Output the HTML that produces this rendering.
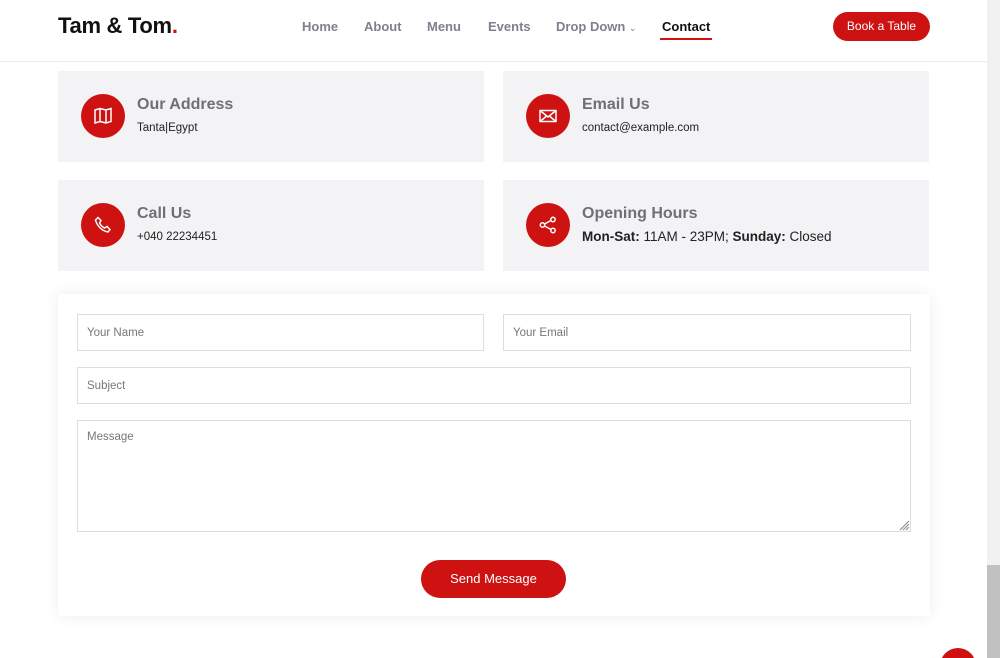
<!DOCTYPE html>
<html style="overflow:hidden;height:658px"><head><meta charset="utf-8"><style>
*{box-sizing:border-box;margin:0;padding:0}
body{width:1000px;height:658px;overflow:hidden;background:#fff;font-family:"Liberation Sans",sans-serif;position:relative}
.sb{position:absolute;left:987px;top:0;width:13px;height:658px;background:#f1f1f1}
.sb i{position:absolute;left:0;top:565px;width:13px;height:93px;background:#c1c1c1}
.hdr{position:absolute;left:0;top:0;width:987px;height:62px;border-bottom:1px solid #ececec;background:#fff}
.logo{position:absolute;left:58px;top:13px;font-size:22px;font-weight:bold;color:#111;letter-spacing:-0.3px}
.logo span{color:#ce1212}
.nav a{position:absolute;top:19px;font-size:13px;color:#7f7f90;text-decoration:none;font-weight:bold}
.nav a.act{color:#111}
.nav a.act:after{content:"";position:absolute;left:-2px;right:-2px;top:19px;height:2px;background:#ce1212}
.btn{position:absolute;left:833px;top:12px;width:97px;height:29px;border-radius:15px;background:#ce1212;color:#fff;font-size:12px;text-align:center;line-height:29px}
.card{position:absolute;width:426px;height:91px;background:#f3f3f5}
.ic{position:absolute;left:23px;top:23px;width:44px;height:44px;border-radius:50%;background:#ce1212}
.ic svg{position:absolute;left:12px;top:12px}
.card h3{position:absolute;left:79px;top:25px;font-size:16px;color:#6f6f7a}
.card p{position:absolute;left:79px;top:51px;font-size:11.5px;color:#222}
.form{position:absolute;left:58px;top:294px;width:872px;height:322px;background:#fff;box-shadow:0 0 15px rgba(0,0,0,0.07)}
.in{position:absolute;border:1px solid #ddd;background:#fff;font-size:11.5px;color:#777;padding:12px 9px}
.send{position:absolute;left:421px;top:560px;width:145px;height:38px;border-radius:19px;background:#ce1212;color:#fff;font-size:13px;text-align:center;line-height:38px}
.dotw{position:absolute;left:930px;top:640px;width:56px;height:18px;overflow:hidden}
.dot{position:absolute;left:10px;top:8px;width:36px;height:36px;border-radius:50%;background:#ce1212}
</style></head><body>
<div class="hdr">
<div class="logo">Tam &amp; Tom<span>.</span></div>
<div class="nav">
<a style="left:302px">Home</a><a style="left:364px">About</a><a style="left:427px">Menu</a><a style="left:488px">Events</a><a style="left:556px">Drop Down <span style="font-size:9px;font-weight:normal">&#8964;</span></a><a class="act" style="left:662px">Contact</a>
</div>
<div class="btn">Book a Table</div>
</div>

<div class="card" style="left:58px;top:71px"><div class="ic"><svg width="20" height="20" viewBox="0 0 20 20" fill="none" stroke="#fff" stroke-width="1.5"><path d="M2 4l5-1.5 6 1.5 5-1.5v13l-5 1.5-6-1.5-5 1.5z M7 2.5v13 M13 4v13"/></svg></div><h3>Our Address</h3><p>Tanta|Egypt</p></div>
<div class="card" style="left:503px;top:71px"><div class="ic"><svg width="20" height="20" viewBox="0 0 20 20" fill="none" stroke="#fff" stroke-width="1.5"><rect x="2" y="4.5" width="16" height="11"/><path d="M2 4.5l8 6.5 8-6.5 M2 15.5l6-5 M18 15.5l-6-5"/></svg></div><h3>Email Us</h3><p>contact@example.com</p></div>
<div class="card" style="left:58px;top:180px"><div class="ic"><svg width="20" height="20" viewBox="0 0 20 20" fill="none" stroke="#fff" stroke-width="1.5"><path d="M5 2.5l3 3-1.5 2.5c1 2 3 4 5 5l2.5-1.5 3 3-2 2.5C9 16 4 11 2.5 5z"/></svg></div><h3>Call Us</h3><p>+040 22234451</p></div>
<div class="card" style="left:503px;top:180px"><div class="ic"><svg width="20" height="20" viewBox="0 0 20 20" fill="none" stroke="#fff" stroke-width="1.5"><circle cx="15" cy="4.5" r="2.2"/><circle cx="4.5" cy="10" r="2.2"/><circle cx="15" cy="15.5" r="2.2"/><path d="M6.5 9l6.5-3.5 M6.5 11l6.5 3.5"/></svg></div><h3>Opening Hours</h3><p style="font-size:13.5px;top:49px"><b>Mon-Sat:</b> 11AM - 23PM; <b>Sunday:</b> Closed</p></div>

<div class="form"></div>
<div class="in" style="left:77px;top:314px;width:407px;height:37px">Your Name</div>
<div class="in" style="left:503px;top:314px;width:408px;height:37px">Your Email</div>
<div class="in" style="left:77px;top:367px;width:834px;height:37px">Subject</div>
<div class="in" style="left:77px;top:420px;width:834px;height:112px;padding-top:10px">Message</div>
<svg style="position:absolute;left:898px;top:519px" width="12" height="12"><path d="M11 2L2 11M11 5L5 11M11 8L8 11" stroke="#888" stroke-width="1"/></svg>
<div class="send">Send Message</div>
<div class="dotw"><div class="dot"></div></div>
<div class="sb"><i></i></div>
</body></html>
